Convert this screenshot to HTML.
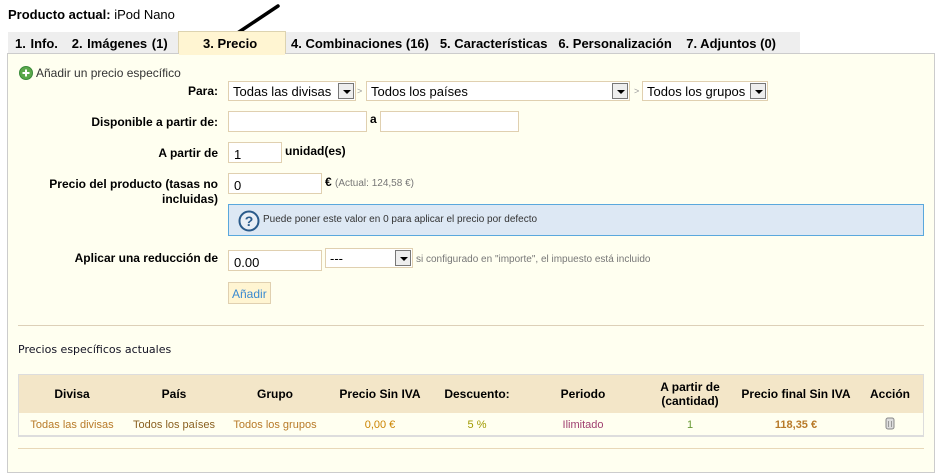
<!DOCTYPE html>
<html><head><meta charset="utf-8"><style>
*{margin:0;padding:0;box-sizing:border-box}
body{width:937px;height:463px;background:#fff;font-family:"Liberation Sans",Arial,sans-serif;font-size:12px;color:#000;position:relative;overflow:hidden}
.a{position:absolute;white-space:nowrap}
.b{font-weight:bold}
.inp{position:absolute;background:#fff;border:1px solid #e0d0b0;height:21px;font-size:13px;padding:4px 0 0 5px}
.sel{position:absolute;background:#fff;border:1px solid #e0d0b0;height:20px;font-size:13px;padding:2px 0 0 4px;color:#000}
.arr{position:absolute;right:1px;top:1px;width:16px;height:16px;border:1px solid #777;background:#eee}
.arr:after{content:"";position:absolute;left:4px;top:6px;border:4px solid transparent;border-top:4px solid #000}
.gt{position:absolute;font-size:9px;color:#999}
.lbl{position:absolute;font-weight:bold;text-align:right;width:210px;left:8px;font-size:12px;line-height:15px}
th{font-weight:bold;font-size:12px;text-align:center}
</style></head><body>
<div class="a b" style="left:8px;top:7px;font-size:13px">Producto actual: <span style="font-weight:normal">iPod Nano</span></div>
<svg class="a" style="left:230px;top:2px" width="52" height="36"><line x1="6" y1="32" x2="48" y2="4" stroke="#000" stroke-width="3.5" stroke-linecap="round"/></svg>
<div class="a" style="left:8px;top:32px;width:792px;height:21px;background:#eee"></div>
<div class="a" style="left:178px;top:31px;width:108px;height:23px;background:#fff5d2;border:1px solid #ddd3b0;border-bottom:none"></div>
<div class="a b" style="left:15px;top:36px;font-size:13px;word-spacing:1px">1. Info.&nbsp;&nbsp;&nbsp;2. Imágenes (1)</div>
<div class="a b" style="left:203px;top:36px;font-size:13px">3. Precio</div>
<div class="a b" style="left:291px;top:36px;font-size:13px">4. Combinaciones (16)&nbsp;&nbsp;&nbsp;5. Características&nbsp;&nbsp;&nbsp;6. Personalización&nbsp;&nbsp;&nbsp;&nbsp;7. Adjuntos (0)</div>
<div class="a" style="left:7px;top:53px;width:928px;height:420px;background:#fffff0;border:1px solid #ccc;border-top:1px solid #ccc"></div>
<div class="a" style="left:179px;top:53px;width:106px;height:2px;background:#fff5d2"></div>
<svg class="a" style="left:19px;top:66px" width="14" height="14"><circle cx="7" cy="7" r="6.5" fill="#5aa84a" stroke="#3a8a3a"/><path d="M7 3.5v7M3.5 7h7" stroke="#fff" stroke-width="2"/></svg>
<div class="a" style="left:36px;top:66px;color:#333">Añadir un precio específico</div>
<div class="lbl" style="top:84px">Para:</div>
<div class="sel" style="left:228px;top:81px;width:128px">Todas las divisas<span class="arr"></span></div>
<div class="gt" style="left:357px;top:86px">&gt;</div>
<div class="sel" style="left:366px;top:81px;width:264px">Todos los países<span class="arr"></span></div>
<div class="gt" style="left:634px;top:86px">&gt;</div>
<div class="sel" style="left:642px;top:81px;width:126px">Todos los grupos<span class="arr"></span></div>
<div class="lbl" style="top:115px">Disponible a partir de:</div>
<div class="inp" style="left:228px;top:111px;width:139px"></div>
<div class="a b" style="left:370px;top:112px">a</div>
<div class="inp" style="left:380px;top:111px;width:139px"></div>
<div class="lbl" style="top:146px">A partir de</div>
<div class="inp" style="left:228px;top:142px;width:54px">1</div>
<div class="a b" style="left:285px;top:144px">unidad(es)</div>
<div class="lbl" style="top:177px">Precio del producto (tasas no<br>incluidas)</div>
<div class="inp" style="left:228px;top:173px;width:94px">0</div>
<div class="a" style="left:325px;top:175px"><b>€</b> <span style="font-size:10px;color:#777">(Actual: 124,58 €)</span></div>
<div class="a" style="left:228px;top:204px;width:696px;height:32px;background:#dde8f4;border:1px solid #5aa8dd"></div>
<svg class="a" style="left:238px;top:210px" width="22" height="22"><circle cx="11" cy="11" r="9.5" fill="#e8eef6" stroke="#2a5a8a" stroke-width="2"/><text x="11" y="16" font-size="14" font-weight="bold" text-anchor="middle" fill="#2a5a8a" font-family="Liberation Sans">?</text></svg>
<div class="a" style="left:263px;top:214px;font-size:10px;color:#333">Puede poner este valor en 0 para aplicar el precio por defecto</div>
<div class="lbl" style="top:251px">Aplicar una reducción de</div>
<div class="inp" style="left:228px;top:250px;width:94px">0.00</div>
<div class="sel" style="left:325px;top:248px;width:88px">---<span class="arr"></span></div>
<div class="a" style="left:416px;top:254px;font-size:10px;color:#777">si configurado en "importe", el impuesto está incluido</div>
<div class="a" style="left:228px;top:282px;width:43px;height:22px;background:#fff5d2;border:1px solid #e0d0b0;color:#3a8ad0;font-size:12px;padding:4px 0 0 3px">Añadir</div>
<div class="a" style="left:18px;top:325px;width:906px;height:1px;background:#ddd0b8"></div>
<div class="a" style="left:18px;top:343px;font-family:'DejaVu Sans',sans-serif;font-size:11px;color:#112">Precios específicos actuales</div>
<div class="a" style="left:18px;top:374px;width:906px;height:63px;border:1px solid #ddd;border-bottom:2px solid #ddd"></div>
<div class="a" style="left:19px;top:375px;width:904px;height:38px;background:#f3e6c8"></div>
<table class="a" style="left:19px;top:375px;width:904px;border-collapse:collapse">
<tr style="height:38px"><th style="width:106px">Divisa</th><th style="width:98px">País</th><th style="width:104px">Grupo</th><th style="width:106px">Precio Sin IVA</th><th style="width:88px">Descuento:</th><th style="width:124px">Periodo</th><th style="width:90px">A partir de<br>(cantidad)</th><th style="width:122px">Precio final Sin IVA</th><th>Acción</th></tr>
<tr style="height:24px;font-size:11px;text-align:center"><td style="color:#b87a28">Todas las divisas</td><td style="color:#8a6020">Todos los países</td><td style="color:#b87a28">Todos los grupos</td><td style="color:#cc8400">0,00 €</td><td style="color:#a09a00">5 %</td><td style="color:#a04070">Ilimitado</td><td style="color:#669933">1</td><td style="color:#b87a28;font-weight:bold">118,35 €</td><td><svg width="10" height="13"><rect x="1" y="1" width="8" height="11" rx="2" fill="#ddd" stroke="#888"/><line x1="3.5" y1="4" x2="3.5" y2="10" stroke="#999"/><line x1="6.5" y1="4" x2="6.5" y2="10" stroke="#999"/></svg></td></tr>
</table>
<div class="a" style="left:18px;top:448px;width:906px;height:1px;background:#e8d8b8"></div>
</body></html>
